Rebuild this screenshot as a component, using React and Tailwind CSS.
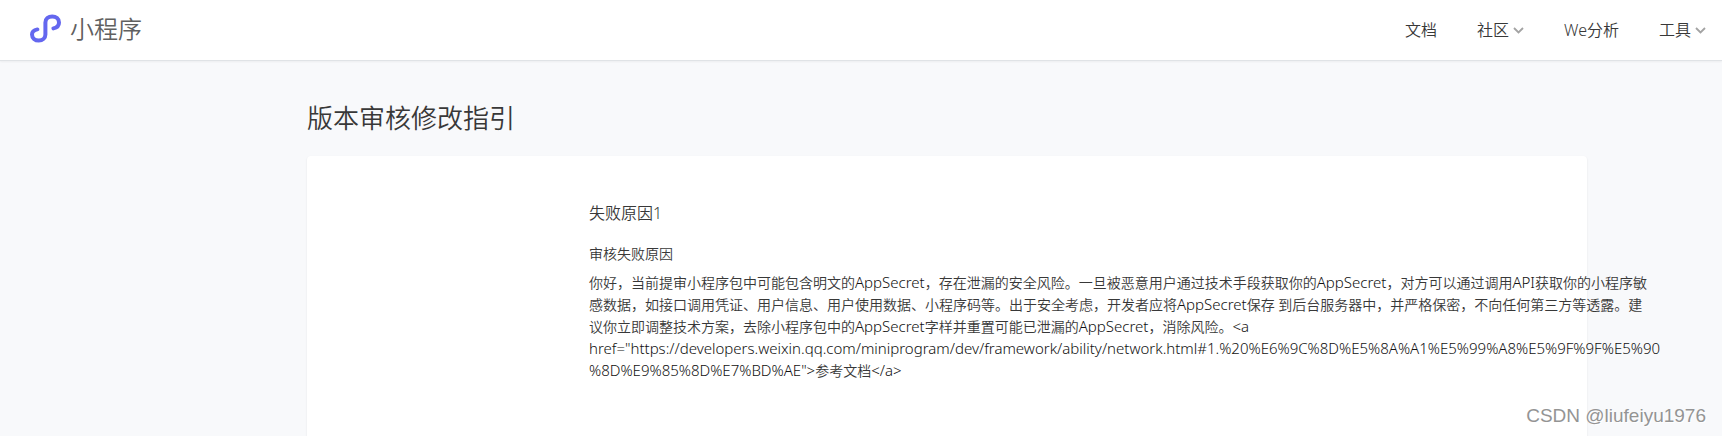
import React from "react";

const navItems = [
  { label: "文档", href: "#docs" },
  { label: "社区", menu: true },
  { label: "We分析", href: "#we-analysis" },
  { label: "工具", menu: true },
];

const reasonLines = [
  "你好，当前提审小程序包中可能包含明文的AppSecret，存在泄漏的安全风险。一旦被恶意用户通过技术手段获取你的AppSecret，对方可以通过调用API获取你的小程序敏",
  "感数据，如接口调用凭证、用户信息、用户使用数据、小程序码等。出于安全考虑，开发者应将AppSecret保存 到后台服务器中，并严格保密，不向任何第三方等透露。建",
  "议你立即调整技术方案，去除小程序包中的AppSecret字样并重置可能已泄漏的AppSecret，消除风险。<a",
  'href="https://developers.weixin.qq.com/miniprogram/dev/framework/ability/network.html#1.%20%E6%9C%8D%E5%8A%A1%E5%99%A8%E5%9F%9F%E5%90',
  '%8D%E9%85%8D%E7%BD%AE">参考文档</a>',
];

// Latin runs are set one size up so they sit evenly beside the Chinese text
const MixedText = ({ text }) =>
  text.split(/([!-~]+)/).map((part, i) =>
    i % 2 ? (
      <span key={i} className="text-[15px] leading-none text-[#111111]">
        {part}
      </span>
    ) : (
      part
    )
  );

const Logo = () => (
  <svg width="32" height="30" viewBox="0 0 32 30" fill="none" aria-hidden="true">
    <path
      d="M7.4 15.4C4.2 16 2 17.8 2 20.6C2 24 5 26.6 8.8 26.6C12.6 26.6 15.4 24 15.4 20.6V8.4C15.4 5 18.4 2.4 22.2 2.4C26 2.4 29 5 29 8.4C29 11.2 26.8 13.6 23.4 14.4"
      stroke="#6467ef"
      strokeWidth="4"
      strokeLinecap="round"
    />
  </svg>
);

const Chevron = () => (
  <svg width="11" height="10" viewBox="0 0 11 10" fill="none" aria-hidden="true">
    <path d="M1 3L5.5 7.5L10 3" stroke="#a3a3a3" strokeWidth="1.8" />
  </svg>
);

const Header = () => (
  <header className="flex h-[61px] items-center justify-between border-b border-[#e0e3e6] bg-white pr-4 pb-0.5 pl-[30px] shadow-[0_1px_2px_rgba(0,0,0,0.05)]">
    <a href="#home" className="flex items-center gap-2 text-2xl text-[#606060]">
      <Logo />
      小程序
    </a>
    <nav className="flex items-center gap-10 pt-0.5 text-base">
      {navItems.map((item) =>
        item.menu ? (
          <button key={item.label} type="button" className="flex items-center gap-1">
            {item.label}
            <Chevron />
          </button>
        ) : (
          <a key={item.label} href={item.href}>
            {item.label}
          </a>
        )
      )}
    </nav>
  </header>
);

const App = () => {
  return (
    <div className="relative h-screen overflow-hidden bg-[#f8f9fb] font-['Noto_Sans','Noto_Sans_CJK_SC_DemiLight','Noto_Sans_CJK_SC',sans-serif] font-light text-[#383838]">
      <Header />
      <main className="pt-9 pr-[135px] pl-[307px]">
        <h1 className="text-[26px] leading-[42px]">版本审核修改指引</h1>
        <section className="mt-[17px] min-h-screen rounded-sm bg-white pt-11 pl-[282px] shadow-[0_1px_2px_rgba(0,0,0,0.1)]">
          <h2 className="text-base leading-[26px]">失败原因1</h2>
          <h3 className="mt-4 text-sm leading-6">审核失败原因</h3>
          <p className="mt-1.5 text-sm leading-[22px] whitespace-nowrap">
            {reasonLines.map((line) => (
              <span key={line} className="block">
                <MixedText text={line} />
              </span>
            ))}
          </p>
        </section>
      </main>
      {/* Watermark */}
      <div className="absolute right-4 bottom-2 font-['Liberation_Sans',sans-serif] text-[19px] leading-6 font-normal text-[#949494] [text-shadow:1px_1px_0_#ffffff]">
        CSDN @liufeiyu1976
      </div>
    </div>
  );
};

export default App;
